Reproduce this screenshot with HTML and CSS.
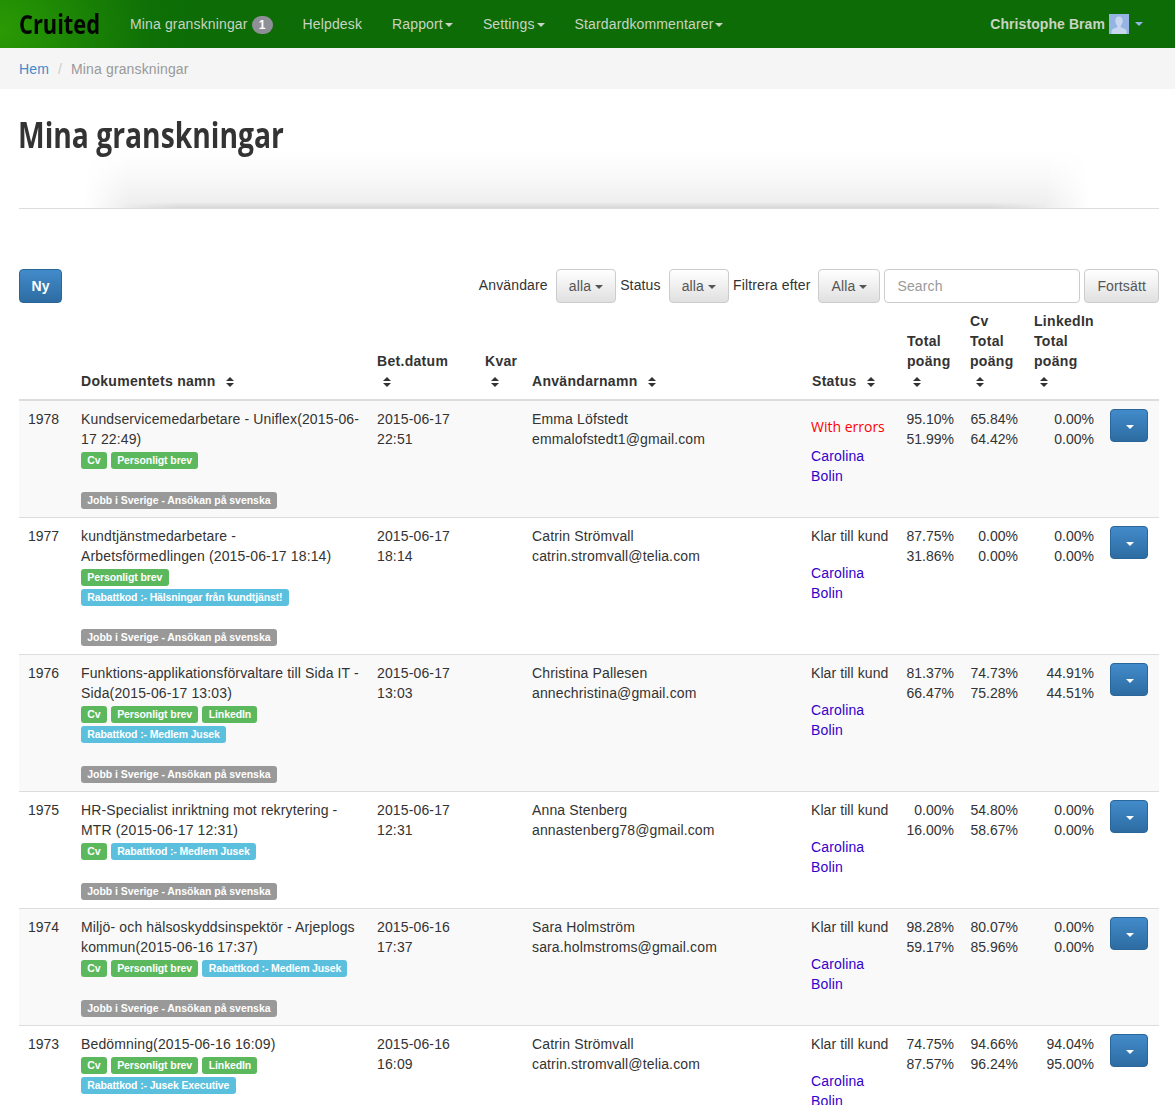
FILE: index.html
```html
<!DOCTYPE html>
<html lang="sv">
<head>
  <meta charset="UTF-8" />
  <meta name="viewport" content="width=device-width, initial-scale=1.0"/>
  <title>Mina granskningar</title>
  <link rel="stylesheet" href="styles.css">
</head>
<body>
  <nav class="navbar">
    <a class="brand">Cruited</a>
    <ul class="nav-links">
      <li>Mina granskningar <span class="badge">1</span></li>
      <li>Helpdesk</li>
      <li>Rapport<span class="caret"></span></li>
      <li>Settings<span class="caret"></span></li>
      <li>Stardardkommentarer<span class="caret"></span></li>
    </ul>
    <div class="nav-user">
      <span>Christophe Bram</span>
      <svg class="avatar" viewBox="0 0 20 20">
        <rect width="20" height="20" fill="#95b3e3"/>
        <path d="M10 2.500c2.500 0 3.700 2 3.700 4.300 0 2-.9 3.800-1.900 4.800v1.600c2.200.9 5 1.600 5.700 3.300V20H2.500v-3.500c.7-1.700 3.500-2.400 5.700-3.300v-1.600c-1-1-1.900-2.800-1.900-4.800C6.300 4.500 7.500 2.500 10 2.500z" fill="#c9d7ee"/>
      </svg>
      <span class="caret"></span>
    </div>
  </nav>

  <ol class="breadcrumb">
    <li><a>Hem</a></li>
    <li class="sep">/</li>
    <li class="active">Mina granskningar</li>
  </ol>

  <main class="container">
    <div class="page-header">
      <h1>Mina granskningar</h1>
    </div>

    <div class="toolbar">
      <button class="btn btn-primary btn-new">Ny</button>
      <div class="filters">
        <span class="filter-label">Användare</span>
        <button class="btn">alla <span class="caret"></span></button>
        <span class="filter-label">Status</span>
        <button class="btn">alla <span class="caret"></span></button>
        <span class="filter-label">Filtrera efter</span>
        <button class="btn">Alla <span class="caret"></span></button>
        <input class="search" type="text" placeholder="Search">
        <button class="btn">Fortsätt</button>
      </div>
    </div>

    <table class="reviews">
      <colgroup>
        <col class="c-id"><col class="c-name"><col class="c-date"><col class="c-left"><col class="c-user">
        <col class="c-status"><col class="c-total"><col class="c-cv"><col class="c-li"><col class="c-action">
      </colgroup>
      <thead>
        <tr>
          <th></th>
          <th>Dokumentets namn <span class="sort"></span></th>
          <th>Bet.datum<br><span class="sort first"></span></th>
          <th>Kvar<br><span class="sort first"></span></th>
          <th>Användarnamn <span class="sort"></span></th>
          <th>Status <span class="sort"></span></th>
          <th>Total<br>poäng<br><span class="sort first"></span></th>
          <th>Cv<br>Total<br>poäng<br><span class="sort first"></span></th>
          <th>LinkedIn<br>Total<br>poäng<br><span class="sort first"></span></th>
          <th></th>
        </tr>
      </thead>
      <tbody id="rows"></tbody>
    </table>
  </main>

  <script>
    const CV = ["green", "Cv"];
    const BREV = ["green", "Personligt brev"];
    const LI = ["green", "LinkedIn"];
    const JUSEK = ["blue", "Rabattkod :- Medlem Jusek"];

    const reviews = [
      { id: 1978, name: "Kundservicemedarbetare - Uniflex(2015-06-17 22:49)", date: "2015-06-17 22:51",
        user: "Emma Löfstedt", mail: "emmalofstedt1@gmail.com", errors: true,
        tags: [[CV, BREV]], total: ["95.10%", "51.99%"], cv: ["65.84%", "64.42%"], li: ["0.00%", "0.00%"] },
      { id: 1977, name: "kundtjänstmedarbetare - Arbetsförmedlingen (2015-06-17 18:14)", date: "2015-06-17 18:14",
        user: "Catrin Strömvall", mail: "catrin.stromvall@telia.com",
        tags: [[BREV], [["blue", "Rabattkod :- Hälsningar från kundtjänst!"]]], total: ["87.75%", "31.86%"], cv: ["0.00%", "0.00%"], li: ["0.00%", "0.00%"] },
      { id: 1976, name: "Funktions-applikationsförvaltare till Sida IT - Sida(2015-06-17 13:03)", date: "2015-06-17 13:03",
        user: "Christina Pallesen", mail: "annechristina@gmail.com",
        tags: [[CV, BREV, LI], [JUSEK]], total: ["81.37%", "66.47%"], cv: ["74.73%", "75.28%"], li: ["44.91%", "44.51%"] },
      { id: 1975, name: "HR-Specialist inriktning mot rekrytering - MTR (2015-06-17 12:31)", date: "2015-06-17 12:31",
        user: "Anna Stenberg", mail: "annastenberg78@gmail.com",
        tags: [[CV, JUSEK]], total: ["0.00%", "16.00%"], cv: ["54.80%", "58.67%"], li: ["0.00%", "0.00%"] },
      { id: 1974, name: "Miljö- och hälsoskyddsinspektör - Arjeplogs kommun(2015-06-16 17:37)", date: "2015-06-16 17:37",
        user: "Sara Holmström", mail: "sara.holmstroms@gmail.com",
        tags: [[CV, BREV, JUSEK]], total: ["98.28%", "59.17%"], cv: ["80.07%", "85.96%"], li: ["0.00%", "0.00%"] },
      { id: 1973, name: "Bedömning(2015-06-16 16:09)", date: "2015-06-16 16:09",
        user: "Catrin Strömvall", mail: "catrin.stromvall@telia.com",
        tags: [[CV, BREV, LI], [["blue", "Rabattkod :- Jusek Executive"]]], total: ["74.75%", "87.57%"], cv: ["94.66%", "96.24%"], li: ["94.04%", "95.00%"] }
    ];

    function tagLine(tags) {
      return tags.map(t => `<span class="label ${t[0]}">${t[1]}</span>`).join(" ");
    }

    function pair(values) {
      return `<td class="num">${values[0]}<br>${values[1]}</td>`;
    }

    document.getElementById("rows").innerHTML = reviews.map(r => `
      <tr>
        <td class="id">${r.id}</td>
        <td>${r.name}
          ${r.tags.map(line => `<div>${tagLine(line)}</div>`).join("")}
          <div class="job"><span class="label gray">Jobb i Sverige - Ansökan på svenska</span></div>
        </td>
        <td>${r.date.replace(" ", "<br>")}</td>
        <td></td>
        <td>${r.user}<br>${r.mail}</td>
        <td>
          ${r.errors ? '<div class="state errors">With errors</div>' : '<div class="state">Klar till kund</div>'}
          <div class="owner">Carolina Bolin</div>
        </td>
        ${pair(r.total)}${pair(r.cv)}${pair(r.li)}
        <td class="action"><button class="btn btn-primary btn-menu"><span class="caret"></span></button></td>
      </tr>`).join("");
  </script>
</body>
</html>
```

FILE: styles.css
```css
* {
  box-sizing: border-box;
}
html, body {
  height: 1105px;
  overflow: hidden;
}
body {
  margin: 0;
  font-family: "Liberation Sans", Arial, sans-serif;
  font-size: 14px;
  line-height: 20px;
  letter-spacing: .14px;
  color: #333;
  background: white;
}
.caret {
  display: inline-block;
  width: 0;
  height: 0;
  margin-left: 2px;
  vertical-align: middle;
  border-top: 4px solid;
  border-left: 4px solid transparent;
  border-right: 4px solid transparent;
}

/* top bar */
.navbar {
  display: flex;
  align-items: center;
  height: 48px;
  padding: 0 19px;
  color: #c9d4c2;
  background: radial-gradient(ellipse 190px 150px at 0 30px, #2a9a04, #0e7006 80%, #0d6c06);
}
.brand {
  width: 111px;
  font-family: "Open Sans", sans-serif;
  font-size: 26px;
  font-weight: 700;
  letter-spacing: 0;
  color: #020602;
  transform: scaleX(.84);
  transform-origin: left center;
}
.nav-links {
  display: flex;
  gap: 30px;
  margin: 0;
  padding: 0;
  list-style: none;
}
.badge {
  display: inline-block;
  min-width: 21px;
  padding: 3px 7px;
  font-size: 12px;
  font-weight: 700;
  line-height: 12px;
  letter-spacing: 0;
  text-align: center;
  color: white;
  background: #8f8f98;
  border-radius: 10px;
}
.nav-user {
  display: flex;
  align-items: center;
  margin-left: auto;
  margin-right: 13px;
  font-weight: 700;
  letter-spacing: .08px;
}
.avatar {
  width: 20px;
  height: 20px;
  margin-left: 4px;
}
.nav-user .caret {
  margin-left: 6px;
  color: #95b3e3;
}

/* breadcrumb */
.breadcrumb {
  display: flex;
  height: 41px;
  margin: 0;
  padding: 11px 19px 10px;
  list-style: none;
  background: #f5f5f5;
}
.breadcrumb a {
  color: #428bca;
}
.sep {
  padding: 0 9px;
  color: #ccc;
}
.active {
  color: #999;
}

/* heading */
.container {
  padding: 0 16px 0 19px;
}
.page-header {
  position: relative;
  height: 120px;
  border-bottom: 1px solid #ddd;
}
.page-header::before, .page-header::after {
  content: "";
  position: absolute;
  bottom: 0;
}
.page-header::before {
  left: 65px;
  right: 69px;
  height: 59px;
  background: linear-gradient(transparent, rgba(0, 0, 0, .02) 40%, rgba(0, 0, 0, .07));
  -webkit-mask-image: linear-gradient(to right, transparent, #000 45px, #000 calc(100% - 45px), transparent);
  mask-image: linear-gradient(to right, transparent, #000 45px, #000 calc(100% - 45px), transparent);
}
.page-header::after {
  left: 100px;
  right: 110px;
  height: 6px;
  background: linear-gradient(transparent, rgba(0, 0, 0, .09));
  -webkit-mask-image: linear-gradient(to right, transparent, #000 60px, #000 calc(100% - 60px), transparent);
  mask-image: linear-gradient(to right, transparent, #000 60px, #000 calc(100% - 60px), transparent);
}
h1 {
  margin: 0 0 0 -1px;
  padding-top: 21px;
  font-family: "Open Sans", sans-serif;
  font-size: 36px;
  line-height: 50px;
  font-weight: 700;
  letter-spacing: 0;
  white-space: nowrap;
  transform: scaleX(.785);
  transform-origin: left center;
}

/* filter row */
.toolbar {
  display: flex;
  justify-content: space-between;
  margin-top: 60px;
}
.filters {
  display: flex;
  gap: 4px;
}
.filter-label {
  line-height: 32px;
}
.btn {
  height: 34px;
  padding: 0 12px;
  font-family: inherit;
  font-size: 14px;
  letter-spacing: inherit;
  color: #333;
  background: linear-gradient(#fff, #e0e0e0);
  border: 1px solid #ccc;
  border-radius: 4px;
  box-shadow: 0 1px 0 rgba(255, 255, 255, .15);
}
.filters .btn {
  color: #555;
}
.filters .caret {
  margin-left: 0;
}
.filter-label + .btn {
  margin-left: 4px;
}
.btn-primary {
  color: white;
  background: linear-gradient(#428bca, #2d6ca2);
  border-color: #2b669a;
}
.btn-new {
  width: 43px;
  padding: 0;
  font-weight: 700;
}
.search {
  width: 196px;
  height: 34px;
  padding: 6px 12px;
  font-family: inherit;
  font-size: 14px;
  letter-spacing: inherit;
  border: 1px solid #ccc;
  border-radius: 4px;
}
.search::placeholder {
  color: #999;
}

/* table */
.reviews {
  width: 1140px;
  table-layout: fixed;
  border-collapse: collapse;
}
.c-id { width: 54px; }
.c-name { width: 296px; }
.c-date { width: 108px; }
.c-left { width: 47px; }
.c-user { width: 279px; }
.c-status { width: 95px; }
.c-total { width: 64px; }
.c-cv { width: 64px; }
.c-li { width: 76px; }
.c-action { width: 57px; }
th {
  padding: 8px;
  text-align: left;
  vertical-align: bottom;
  letter-spacing: .3px;
  border-bottom: 2px solid #ddd;
}
th:nth-child(6), th:nth-child(7) {
  padding-left: 9px;
}
td {
  padding: 8px;
  vertical-align: top;
  border-bottom: 1px solid #ddd;
}
tbody tr:nth-child(odd) {
  background: #f9f9f9;
}
td.id {
  padding-left: 9px;
  letter-spacing: 0;
}
td.num {
  text-align: right;
  letter-spacing: 0;
}
td.action {
  padding-bottom: 0;
}
.sort {
  display: inline-block;
  position: relative;
  width: 8px;
  height: 10px;
  margin-left: 6px;
  vertical-align: -1px;
}
.sort::before, .sort::after {
  content: "";
  position: absolute;
  left: 0;
  border-left: 4px solid transparent;
  border-right: 4px solid transparent;
}
.sort::before {
  top: 0;
  border-bottom: 4px solid #333;
}
.sort::after {
  bottom: 0;
  border-top: 4px solid #333;
}
.label {
  display: inline;
  padding: .2em .6em .3em;
  font-size: 10.5px;
  font-weight: 700;
  line-height: 1;
  letter-spacing: -.1px;
  color: white;
  white-space: nowrap;
  border-radius: 3px;
}
.green { background: #5cb85c; }
.blue { background: #5bc0de; letter-spacing: -.14px; }
.gray { background: #999; letter-spacing: -.04px; }
.job {
  margin-top: 20px;
}
.state {
  margin-bottom: 17px;
  letter-spacing: .08px;
}
.state.errors {
  padding-top: 8px;
  margin-bottom: 9px;
  font-family: "Open Sans", sans-serif;
  letter-spacing: 0;
  color: red;
}
.owner {
  color: #3300cc;
}
.btn-menu {
  width: 38px;
  height: 33px;
  padding: 0;
}
```
